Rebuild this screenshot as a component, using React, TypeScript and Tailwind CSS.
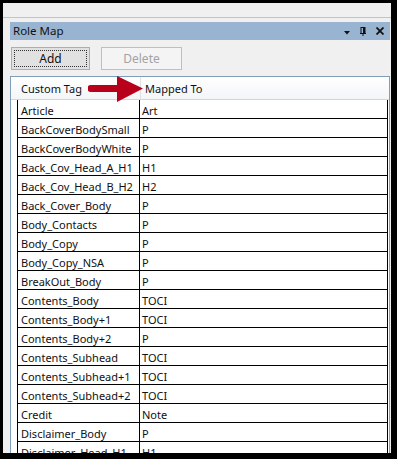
import React from "react";

const rows: [string, string][] = [
  ["Article", "Art"],
  ["BackCoverBodySmall", "P"],
  ["BackCoverBodyWhite", "P"],
  ["Back_Cov_Head_A_H1", "H1"],
  ["Back_Cov_Head_B_H2", "H2"],
  ["Back_Cover_Body", "P"],
  ["Body_Contacts", "P"],
  ["Body_Copy", "P"],
  ["Body_Copy_NSA", "P"],
  ["BreakOut_Body", "P"],
  ["Contents_Body", "TOCI"],
  ["Contents_Body+1", "TOCI"],
  ["Contents_Body+2", "P"],
  ["Contents_Subhead", "TOCI"],
  ["Contents_Subhead+1", "TOCI"],
  ["Contents_Subhead+2", "TOCI"],
  ["Credit", "Note"],
  ["Disclaimer_Body", "P"],
  ["Disclaimer_Head_H1", "H1"],
];

export default function App() {
  return (
    <div
      className="w-[397px] h-[459px] bg-black pl-[3px] pt-[3px] overflow-hidden text-[11px] text-[#111]"
      style={{ fontFamily: '"Noto Sans", "Open Sans", sans-serif' }}
    >
      <div className="w-[388px] h-[450px] bg-[#f0f0f0] flex flex-col overflow-hidden">
        <div className="h-[15px] shrink-0 bg-[#f0f0f0] border-b border-[#c4c4c4]" />
        <div className="flex flex-1 pt-[4px] pl-[7px]">
          <div className="w-[380px] flex flex-col relative">
            {/* title bar */}
            <div className="h-[18px] shrink-0 bg-[#99b4d1] flex items-center pl-[3px] pr-[6px] text-[11.5px]">
              <span className="leading-none">Role Map</span>
              <div className="ml-auto flex items-center">
                <svg width="6" height="4" viewBox="0 0 6 4" className="mr-[10px] mt-[3px]">
                  <path d="M0 0 H6 L3 3.5 Z" fill="#111" />
                </svg>
                <svg width="6" height="9" viewBox="0 0 6 9" className="mr-[10px]">
                  <rect x="1" y="0.5" width="4" height="6" fill="none" stroke="#111" strokeWidth="1" />
                  <rect x="3" y="0.5" width="2" height="6" fill="#111" />
                  <path d="M0 6.5 H6 M3 6.5 V9" stroke="#111" strokeWidth="1" />
                </svg>
                <svg width="8" height="8" viewBox="0 0 8 8">
                  <path d="M0.5 0.5 L7.5 7.5 M7.5 0.5 L0.5 7.5" stroke="#111" strokeWidth="1.8" />
                </svg>
              </div>
            </div>
            {/* buttons */}
            <div className="h-[36px] shrink-0 flex items-start pt-[7px] pl-[1px] gap-[11px] text-[12px]">
              <button className="w-[79px] h-[23px] bg-[#e1e1e1] border border-[#adadad] p-[2px] flex">
                <span className="flex-1 border border-dotted border-[#333] flex items-center justify-center leading-none">
                  Add
                </span>
              </button>
              <button className="w-[81px] h-[23px] bg-[#f4f4f4] border border-[#bfbfbf] text-[#a3a3a3] flex items-center justify-center leading-none">
                Delete
              </button>
            </div>
            {/* grid */}
            <div className="flex-1 border border-b-0 border-[#7f9db9] bg-white overflow-hidden">
              <div className="h-[23px] flex border-b border-[#d5d5d5] bg-gradient-to-b from-white to-[#f3f5f8]">
                <div className="w-[6px] shrink-0" />
                <div className="w-[124px] shrink-0 border-r border-[#e0e0e0] flex items-center pl-[4px] pt-[2px]">
                  Custom Tag
                </div>
                <div className="flex-1 flex items-center pl-[4px] pt-[2px]">Mapped To</div>
              </div>
              {rows.map(([a, b]) => (
                <div key={a} className="h-[19px] flex">
                  <div className="w-[6px] shrink-0 bg-white" />
                  <div className="flex flex-1 border-l border-b border-black">
                    <div className="w-[122px] shrink-0 border-r border-black pl-[3px] pt-[2px] flex items-center leading-none">
                      {a}
                    </div>
                    <div className="flex-1 border-r border-black pl-[2px] pt-[2px] flex items-center leading-none">
                      {b}
                    </div>
                  </div>
                  <div className="w-[1px] shrink-0" />
                </div>
              ))}
            </div>
            {/* arrow annotation */}
            <svg
              className="absolute left-[78px] top-[54px]"
              width="56"
              height="27"
              viewBox="0 0 56 27"
            >
              <path
                d="M3 9 H29 V0 L55 12.5 L29 26 V16 H3 A3.5 3.5 0 0 1 3 9 Z"
                fill="#b8001a"
              />
            </svg>
          </div>
        </div>
      </div>
    </div>
  );
}
